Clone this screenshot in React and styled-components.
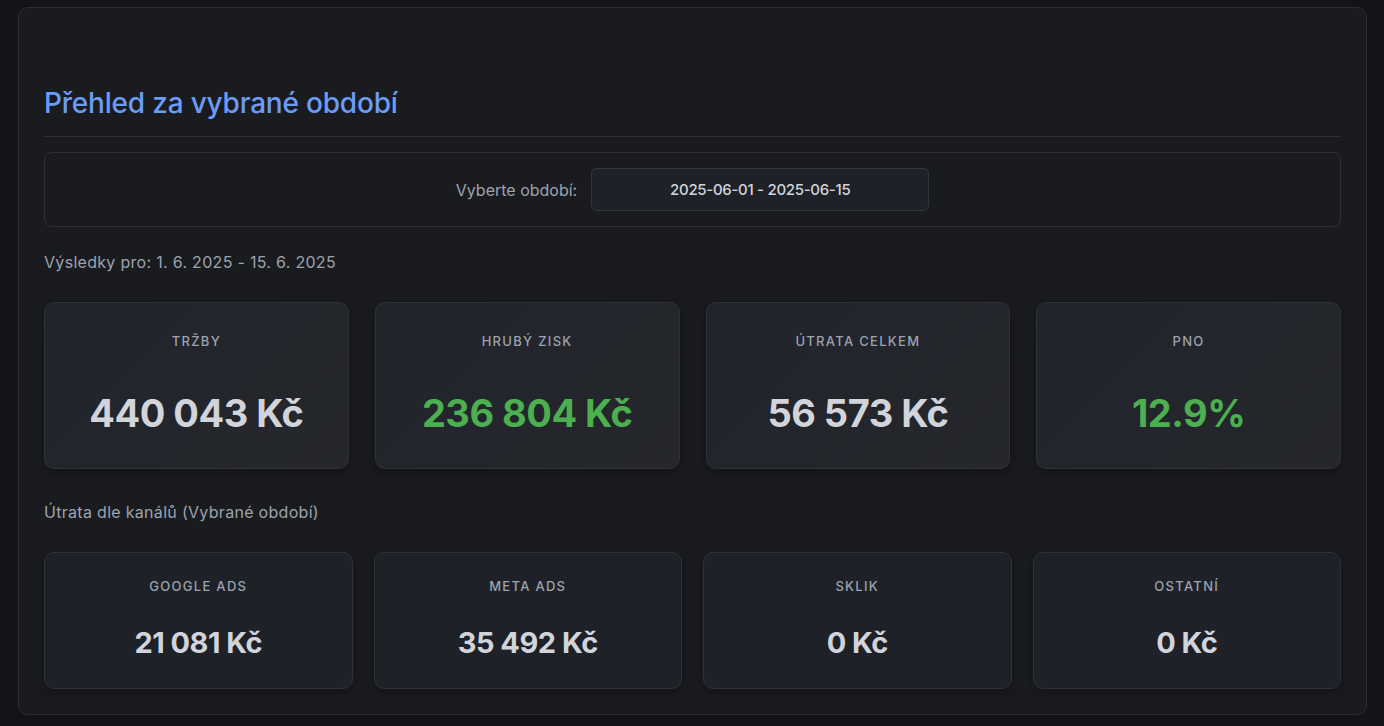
import React from "react";
import styled, { createGlobalStyle } from "styled-components";

const GlobalStyle = createGlobalStyle`
  html, body {
    margin: 0;
    background: #131418;
    font-family: Inter, "Noto Sans", "Liberation Sans", sans-serif;
  }
  * { box-sizing: border-box; }
`;

const summary = [
  { label: "Tržby", value: "440 043 Kč" },
  { label: "Hrubý zisk", value: "236 804 Kč", good: true },
  { label: "Útrata celkem", value: "56 573 Kč" },
  { label: "PNO", value: "12.9%", good: true },
];

const channels = [
  { label: "Google Ads", value: "21 081 Kč" },
  { label: "Meta Ads", value: "35 492 Kč" },
  { label: "Sklik", value: "0 Kč" },
  { label: "Ostatní", value: "0 Kč" },
];

function App() {
  return (
    <Page>
      <GlobalStyle />
      <Panel>
        <Heading>Přehled za vybrané období</Heading>
        <FilterBox>
          <FilterLabel>Vyberte období:</FilterLabel>
          <DateInput>2025-06-01 - 2025-06-15</DateInput>
        </FilterBox>
        <Caption top="25px">Výsledky pro: 1. 6. 2025 - 15. 6. 2025</Caption>
        <CardGrid gap="26px">
          {summary.map((item) => (
            <Card key={item.label} big>
              <CardLabel>{item.label}</CardLabel>
              <CardValue big good={item.good}>
                {item.value}
              </CardValue>
            </Card>
          ))}
        </CardGrid>
        <Caption top="33px">Útrata dle kanálů (Vybrané období)</Caption>
        <CardGrid gap="21px">
          {channels.map((item) => (
            <Card key={item.label}>
              <CardLabel>{item.label}</CardLabel>
              <CardValue>{item.value}</CardValue>
            </Card>
          ))}
        </CardGrid>
      </Panel>
    </Page>
  );
}

const Page = styled.div`
  padding: 7px 17px 12px 18px;
  min-height: 100vh;
`;

const Panel = styled.div`
  background: #1a1b1f;
  border: 1px solid #2c2d33;
  border-radius: 10px;
  padding: 0 25px 25px;
`;

const Heading = styled.h2`
  margin: 79px 0 0;
  padding-bottom: 17px;
  border-bottom: 1px solid #2f3036;
  color: #6b9cf7;
  font-size: 28px;
  font-weight: 500;
  line-height: 32px;
  letter-spacing: -0.2px;
`;

const FilterBox = styled.div`
  margin-top: 15px;
  border: 1px solid #2e3036;
  border-radius: 8px;
  padding: 15px;
  display: flex;
  align-items: center;
  justify-content: center;
  gap: 14px;
`;

const FilterLabel = styled.span`
  color: #9ca3af;
  font-size: 16px;
`;

const DateInput = styled.div`
  width: 338px;
  height: 43px;
  background: #1f2128;
  border: 1px solid #33353c;
  border-radius: 6px;
  display: flex;
  align-items: center;
  justify-content: center;
  color: #d1d5db;
  font-size: 15px;
  font-weight: 500;
  letter-spacing: -0.3px;
`;

const Caption = styled.div`
  margin-top: ${(p) => p.top};
  color: #9ca3af;
  font-size: 16px;
  line-height: 20px;
  letter-spacing: 0.3px;
`;

const CardGrid = styled.div`
  margin-top: 30px;
  display: grid;
  grid-template-columns: repeat(4, 1fr);
  gap: ${(p) => p.gap};
`;

const Card = styled.div`
  display: flex;
  flex-direction: column;
  align-items: center;
  height: ${(p) => (p.big ? "167px" : "137px")};
  padding-top: ${(p) => (p.big ? "30px" : "25px")};
  background: ${(p) =>
    p.big ? "linear-gradient(135deg, #21242b, #25272c)" : "#1f2128"};
  border: 1px solid #2f3137;
  border-radius: 10px;
  box-shadow: 0 4px 12px rgba(0, 0, 0, 0.3);
`;

const CardLabel = styled.div`
  color: #9ca3af;
  font-size: 13px;
  line-height: 16px;
  font-weight: 500;
  letter-spacing: 1.3px;
  text-transform: uppercase;
`;

const CardValue = styled.div`
  margin-top: ${(p) => (p.big ? "41px" : "32px")};
  color: ${(p) => (p.good ? "#4caf50" : "#d1d5db")};
  font-size: ${(p) => (p.big ? "38px" : "29px")};
  line-height: ${(p) => (p.big ? "46px" : "34px")};
  font-weight: 700;
  letter-spacing: -0.5px;
`;

export default App;
